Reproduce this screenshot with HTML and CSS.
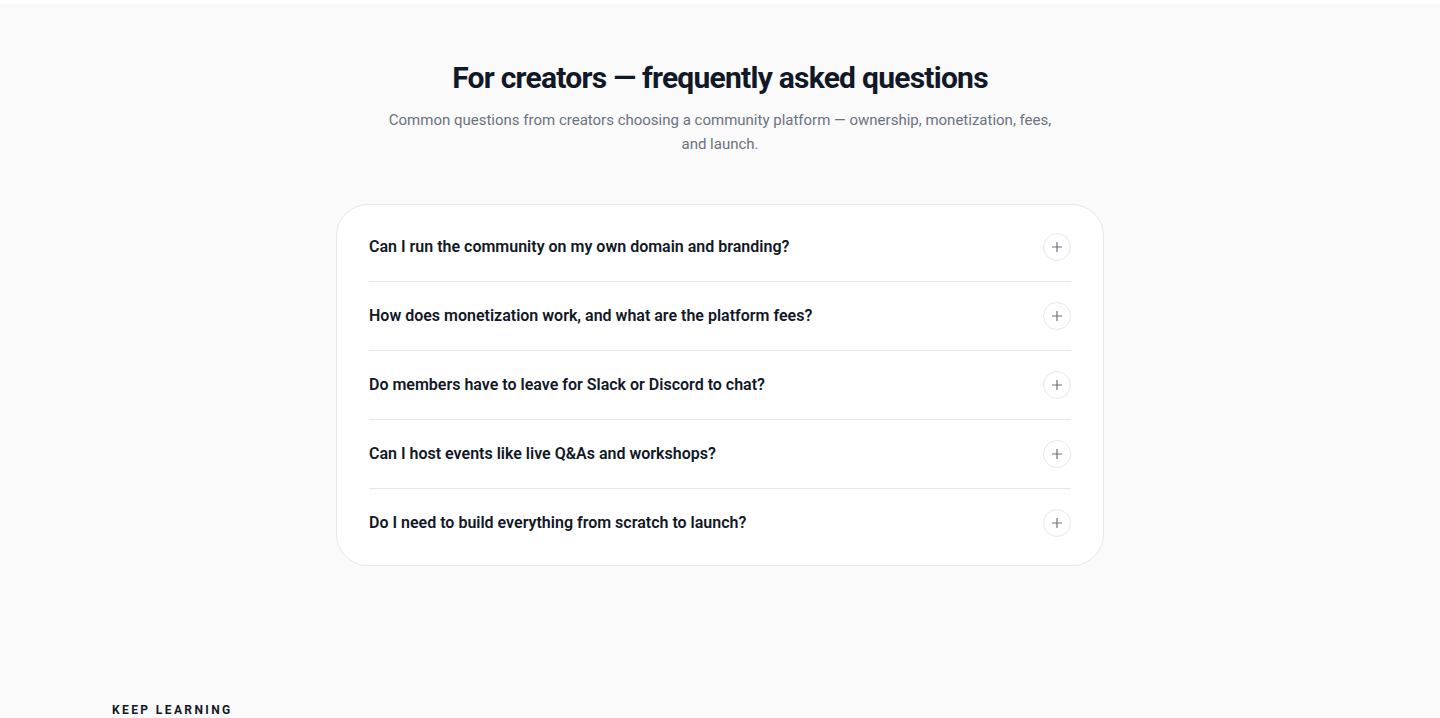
FILE: index.html
```html
<!DOCTYPE html>
<html lang="en">
<head>
<meta charset="utf-8">
<title>FAQ</title>
<link rel="stylesheet" href="styles.css">
</head>
<body>
<div class="topbar"></div>
<main class="page">
  <section class="faq">
    <h2 class="faq-title">For creators — frequently asked questions</h2>
    <p class="faq-sub">Common questions from creators choosing a community platform — ownership, monetization, fees, and launch.</p>
    <div class="faq-card">
      <div class="faq-row"><span class="faq-q">Can I run the community on my own domain and branding?</span><span class="faq-btn"><svg width="12" height="12" viewBox="0 0 12 12"><path d="M6 1v10M1 6h10" stroke="#6b7280" stroke-width="1.2" fill="none"/></svg></span></div>
      <div class="faq-row"><span class="faq-q">How does monetization work, and what are the platform fees?</span><span class="faq-btn"><svg width="12" height="12" viewBox="0 0 12 12"><path d="M6 1v10M1 6h10" stroke="#6b7280" stroke-width="1.2" fill="none"/></svg></span></div>
      <div class="faq-row"><span class="faq-q">Do members have to leave for Slack or Discord to chat?</span><span class="faq-btn"><svg width="12" height="12" viewBox="0 0 12 12"><path d="M6 1v10M1 6h10" stroke="#6b7280" stroke-width="1.2" fill="none"/></svg></span></div>
      <div class="faq-row"><span class="faq-q">Can I host events like live Q&amp;As and workshops?</span><span class="faq-btn"><svg width="12" height="12" viewBox="0 0 12 12"><path d="M6 1v10M1 6h10" stroke="#6b7280" stroke-width="1.2" fill="none"/></svg></span></div>
      <div class="faq-row"><span class="faq-q">Do I need to build everything from scratch to launch?</span><span class="faq-btn"><svg width="12" height="12" viewBox="0 0 12 12"><path d="M6 1v10M1 6h10" stroke="#6b7280" stroke-width="1.2" fill="none"/></svg></span></div>
    </div>
  </section>
  <section class="learn">
    <h3 class="learn-label">KEEP LEARNING</h3>
  </section>
</main>
</body>
</html>
```
FILE: styles.css
```css
* { box-sizing: border-box; }
html, body { margin: 0; padding: 0; }
body {
  background: #fafafa;
  font-family: Roboto, "Liberation Sans", sans-serif;
  color: #111827;
}
.topbar { height: 4px; background: #ffffff; }
.page { display: flex; flex-direction: column; }
.faq {
  display: flex;
  flex-direction: column;
  align-items: center;
  padding: 56px 24px 0;
}
.faq-title {
  margin: 0;
  font-size: 30px;
  line-height: 36px;
  font-weight: 700;
  letter-spacing: -0.75px;
  color: #111827;
}
.faq-sub {
  margin: 12px 0 0;
  max-width: 672px;
  text-align: center;
  font-size: 15px;
  line-height: 24px;
  color: #6b7280;
}
.faq-card {
  margin-top: 48px;
  width: 768px;
  background: #ffffff;
  border: 1px solid #e5e7eb;
  border-radius: 32px;
  padding: 8px 32px;
  display: flex;
  flex-direction: column;
}
.faq-row {
  display: flex;
  align-items: center;
  justify-content: space-between;
  padding: 20px 0;
  min-height: 69px;
  border-bottom: 1px solid #e5e7eb;
}
.faq-row:last-child { border-bottom: none; min-height: 68px; }
.faq-q {
  font-size: 16px;
  line-height: 24px;
  font-weight: 600;
  color: #111827;
}
.faq-btn {
  width: 28px;
  height: 28px;
  border: 1px solid #e5e7eb;
  border-radius: 50%;
  display: flex;
  align-items: center;
  justify-content: center;
  flex-shrink: 0;
}
.learn {
  padding: 136px 112px 0;
}
.learn-label {
  margin: 0;
  font-size: 12px;
  line-height: 16px;
  font-weight: 700;
  letter-spacing: 2.4px;
  color: #111827;
}
```
